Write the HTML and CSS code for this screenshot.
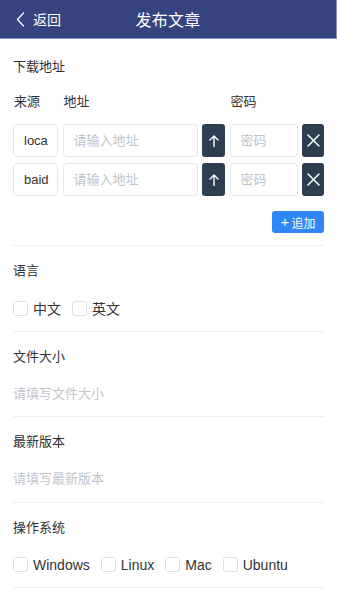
FILE: index.html
```html
<!DOCTYPE html>
<html lang="zh-CN">
<head>
<meta charset="utf-8">
<title>发布文章</title>
<link rel="stylesheet" href="styles.css">
</head>
<body>
<header class="topbar">
  <div class="back">
    <svg class="chev" width="9" height="15" viewBox="0 0 9 15"><path d="M7.5 1 L1.5 7.5 L7.5 14" fill="none" stroke="#fff" stroke-width="1.3" stroke-linecap="round" stroke-linejoin="round"/></svg>
    <span>返回</span>
  </div>
  <div class="title">发布文章</div>
  <div></div>
</header>
<main class="page">
  <section class="block download">
    <div class="label first">下载地址</div>
    <div class="grid heads">
      <span>来源</span><span>地址</span><span></span><span>密码</span><span></span>
    </div>
    <div class="grid row">
      <div class="field">loca</div>
      <div class="field ph">请输入地址</div>
      <div class="btn"><svg width="10" height="12" viewBox="0 0 10 12"><path d="M5 11.5 V1 M1 5 L5 1 L9 5" fill="none" stroke="#fff" stroke-width="1.4" stroke-linecap="round" stroke-linejoin="round"/></svg></div>
      <div class="field ph">密码</div>
      <div class="btn"><svg width="13" height="13" viewBox="0 0 13 13"><path d="M1 1 L12 12 M12 1 L1 12" fill="none" stroke="#fff" stroke-width="1.5" stroke-linecap="round"/></svg></div>
    </div>
    <div class="grid row">
      <div class="field">baid</div>
      <div class="field ph">请输入地址</div>
      <div class="btn"><svg width="10" height="12" viewBox="0 0 10 12"><path d="M5 11.5 V1 M1 5 L5 1 L9 5" fill="none" stroke="#fff" stroke-width="1.4" stroke-linecap="round" stroke-linejoin="round"/></svg></div>
      <div class="field ph">密码</div>
      <div class="btn"><svg width="13" height="13" viewBox="0 0 13 13"><path d="M1 1 L12 12 M12 1 L1 12" fill="none" stroke="#fff" stroke-width="1.5" stroke-linecap="round"/></svg></div>
    </div>
    <div class="addwrap"><div class="add"><span class="plus">+</span>追加</div></div>
  </section>
  <section class="block">
    <div class="label">语言</div>
    <div class="opts">
      <span class="opt"><i class="box"></i>中文</span>
      <span class="opt"><i class="box"></i>英文</span>
    </div>
  </section>
  <section class="block">
    <div class="label">文件大小</div>
    <div class="text ph">请填写文件大小</div>
  </section>
  <section class="block">
    <div class="label">最新版本</div>
    <div class="text ph">请填写最新版本</div>
  </section>
  <section class="block">
    <div class="label">操作系统</div>
    <div class="opts">
      <span class="opt"><i class="box"></i>Windows</span>
      <span class="opt"><i class="box"></i>Linux</span>
      <span class="opt"><i class="box"></i>Mac</span>
      <span class="opt"><i class="box"></i>Ubuntu</span>
    </div>
  </section>
</main>
</body>
</html>
```
FILE: styles.css
```css
* { box-sizing: border-box; }
html, body { margin: 0; padding: 0; background: #fff; }
body {
  font-family: "Liberation Sans", "Noto Sans CJK SC", sans-serif;
  color: #303133;
  width: 338px;
}
.topbar {
  height: 39px;
  background: #37437f;
  border-bottom: 1px solid #8a92c2;
  border-right: 1px solid #8a92c2;
  width: 337px;
  display: grid;
  grid-template-columns: 1fr auto 1fr;
  align-items: center;
  color: #fff;
}
.back {
  display: flex;
  align-items: center;
  padding-left: 16px;
  font-size: 14px;
}
.chev { margin-right: 8px; }
.title { font-size: 16px; letter-spacing: 0.2px; }
.page { padding: 0 14px 0 13px; }
.block {
  border-bottom: 1px solid #eceef3;
  padding: 16px 0 12.5px;
}
.download { padding: 0 0 12px; }
.label {
  font-size: 13px;
  line-height: 18px;
  margin-bottom: 18px;
}
.label.first { margin-top: 19px; margin-bottom: 17px; }
.grid {
  display: grid;
  grid-template-columns: 45px 135px 23px 68px 22px;
  column-gap: 4.5px;
}
.heads {
  font-size: 13px;
  line-height: 18px;
  margin-bottom: 13px;
}
.heads span { padding-left: 1px; }
.row { height: 33px; margin-bottom: 6px; }
.field {
  border: 1px solid #e4e7ed;
  border-radius: 4px;
  font-size: 13px;
  line-height: 31px;
  padding-left: 10px;
  color: #333;
  overflow: hidden;
  white-space: nowrap;
}
.ph { color: #c0c4cc; }
.btn {
  background: #2c3e50;
  border-radius: 3px;
  display: flex;
  align-items: center;
  justify-content: center;
}
.addwrap {
  display: flex;
  justify-content: flex-end;
  margin-top: 15px;
}
.add {
  width: 52px;
  height: 22px;
  background: #2f86f6;
  border-radius: 3px;
  color: #fff;
  font-size: 12px;
  display: flex;
  align-items: center;
  justify-content: center;
}
.plus { font-size: 15px; margin-right: 2px; line-height: 1; position: relative; top: -1px; }
.opts {
  display: flex;
  align-items: center;
  height: 20px;
  font-size: 14px;
  color: #333;
}
.opt {
  display: flex;
  align-items: center;
  margin-right: 11px;
}
.box {
  width: 15px;
  height: 15px;
  border: 1px solid #dcdfe6;
  border-radius: 3px;
  margin-right: 5px;
  display: inline-block;
}
.text {
  height: 20px;
  line-height: 20px;
  font-size: 13px;
}
```
